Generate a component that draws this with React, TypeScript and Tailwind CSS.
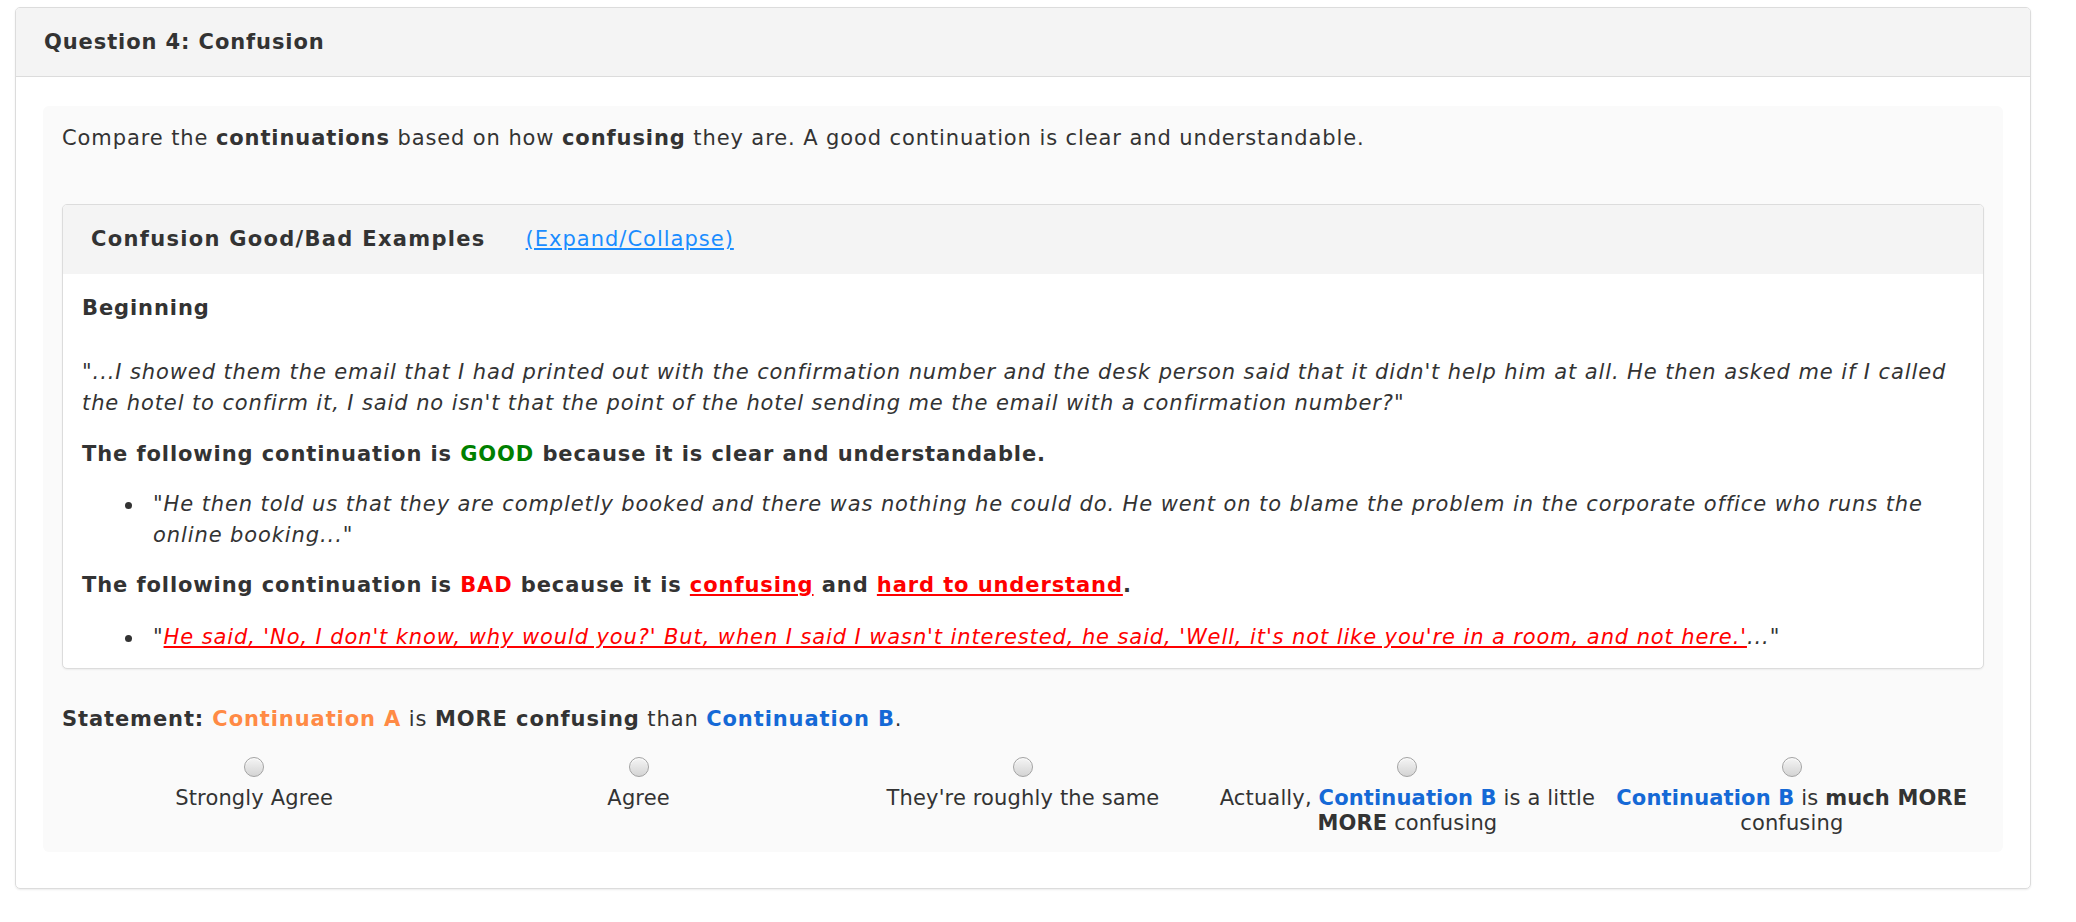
import React from "react";

function Radio() {
  return (
    <div className="w-[20px] h-[20px] rounded-full border border-[#a3a3a3] bg-linear-to-b from-[#f5f5f5] to-[#d4d4d4] shadow-[inset_0_1px_1px_rgba(255,255,255,0.8)]" />
  );
}

function Bullet({ children }: { children: React.ReactNode }) {
  return (
    <li className="flex">
      <span className="w-[71px] shrink-0 flex justify-end pr-[21px] pt-[13px]">
        <span className="block w-[7px] h-[7px] rounded-full bg-[#333]" />
      </span>
      <span className="italic pr-[10px]">{children}</span>
    </li>
  );
}

const options: React.ReactNode[] = [
  <>Strongly Agree</>,
  <>Agree</>,
  <>They're roughly the same</>,
  <>
    Actually, <b className="text-[#1569d6]">Continuation B</b> is a little <b>MORE</b> confusing
  </>,
  <>
    <b className="text-[#1569d6]">Continuation B</b> is <b>much MORE</b> confusing
  </>,
];

export default function App() {
  return (
    <div className="w-[2076px] h-[922px] bg-white pt-[7px] pl-[15px] font-['DejaVu_Sans','Verdana',sans-serif] text-[21px] leading-[31px] tracking-[0.9px] text-[#333]">
      <div className="w-[2016px] border border-[#dcdcdc] rounded-[5px] shadow-[0_1px_2px_rgba(0,0,0,0.08)] overflow-hidden">
        <div className="h-[69px] bg-[#f4f4f4] border-b border-[#dcdcdc] flex items-center pl-[28px] font-bold">
          Question 4: Confusion
        </div>
        <div className="px-[27px] pt-[29px] pb-[36px]">
          <div className="bg-[#fafafa] rounded-[6px] px-[19px] pt-[17px] pb-[16px]">
            <p>
              Compare the <b>continuations</b> based on how <b>confusing</b> they are. A good continuation is
              clear and understandable.
            </p>
            <div className="mt-[50px] border border-[#dcdcdc] rounded-[5px] bg-white overflow-hidden shadow-[0_1px_2px_rgba(0,0,0,0.06)]">
              <div className="h-[69px] bg-[#f4f4f4] flex items-center pl-[28px]">
                <b className="tracking-[1.3px]">Confusion Good/Bad Examples</b>
                <a href="#" className="ml-[40px] text-[#1a8cff] underline tracking-[1px]">
                  (Expand/Collapse)
                </a>
              </div>
              <div className="px-[19px] pt-[19px] pb-[15px]">
                <p className="font-bold">Beginning</p>
                <p className="mt-[33px] italic">
                  "...I showed them the email that I had printed out with the confirmation number and the desk person
                  said that it didn't help him at all. He then asked me if I called the hotel to confirm it, I said no
                  isn't that the point of the hotel sending me the email with a confirmation number?"
                </p>
                <p className="mt-[20px] font-bold">
                  The following continuation is <span className="text-[#008000]">GOOD</span> because it is clear and
                  understandable.
                </p>
                <ul className="mt-[19px]">
                  <Bullet>
                    "He then told us that they are completly booked and there was nothing he could do. He went on to
                    blame the problem in the corporate office who runs the online booking..."
                  </Bullet>
                </ul>
                <p className="mt-[19px] font-bold">
                  The following continuation is <span className="text-[#ff0000]">BAD</span> because it is{" "}
                  <span className="text-[#ff0000] underline">confusing</span> and{" "}
                  <span className="text-[#ff0000] underline">hard to understand</span>.
                </p>
                <ul className="mt-[21px]">
                  <Bullet>
                    "
                    <span className="text-[#ff0000] underline">
                      He said, 'No, I don't know, why would you?' But, when I said I wasn't interested, he said, 'Well,
                      it's not like you're in a room, and not here.'
                    </span>
                    ..."
                  </Bullet>
                </ul>
              </div>
            </div>
            <p className="mt-[35px]">
              <b>Statement: </b>
              <b className="text-[#ff8a45]">Continuation A</b> is <b>MORE confusing</b> than{" "}
              <b className="text-[#1569d6]">Continuation B</b>.
            </p>
            <div className="mt-[22px] grid grid-cols-5">
              {options.map((o, i) => (
                <div key={i} className="flex flex-col items-center text-center">
                  <Radio />
                  <div className="mt-[9px] leading-[25px] tracking-[0.15px]">{o}</div>
                </div>
              ))}
            </div>
          </div>
        </div>
      </div>
    </div>
  );
}
